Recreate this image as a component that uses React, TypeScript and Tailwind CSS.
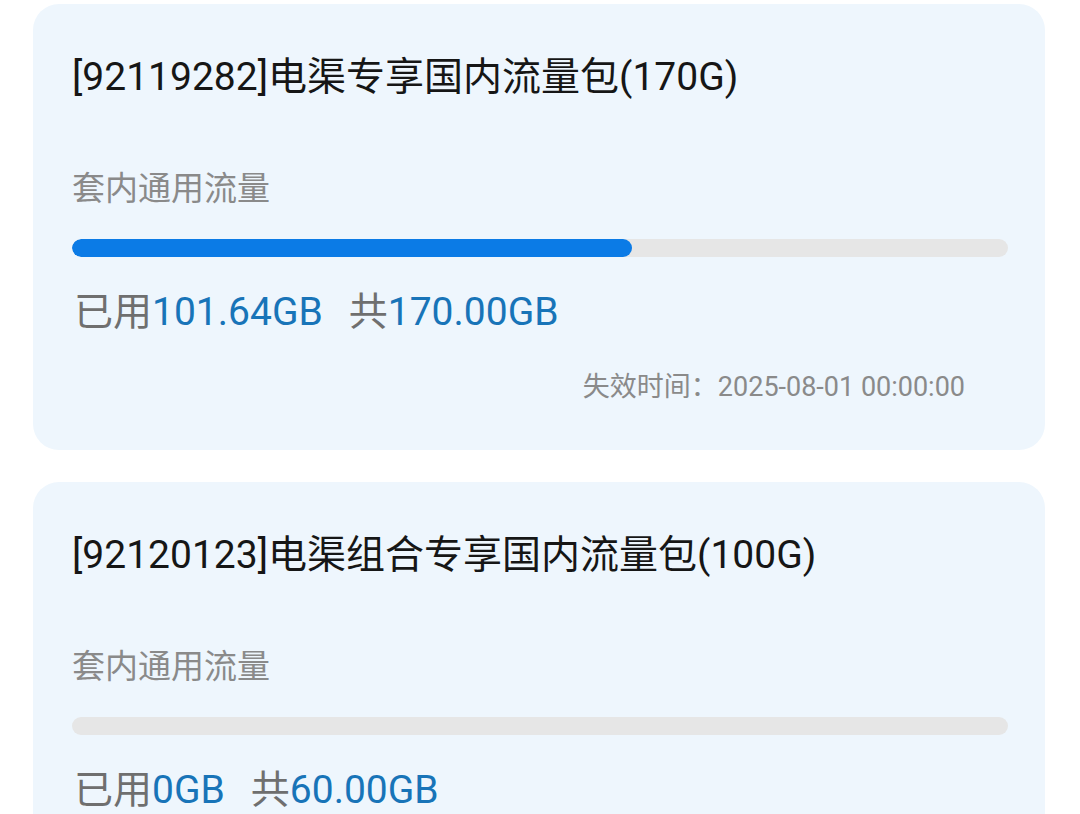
const packages = [
  {
    id: '92119282',
    name: '电渠专享国内流量包(170G)',
    used: '101.64GB',
    total: '170.00GB',
    percent: 59.8,
    expires: '2025-08-01 00:00:00',
  },
  {
    id: '92120123',
    name: '电渠组合专享国内流量包(100G)',
    used: '0GB',
    total: '60.00GB',
    percent: 0,
    expires: '2025-08-01 00:00:00',
  },
]

const font = { fontFamily: 'Roboto, "Noto Sans CJK SC", sans-serif' }

export default function App() {
  return (
    <div className="min-h-screen bg-white pt-[4px] px-[33px]" style={font}>
      <div className="flex flex-col gap-[32px]">
        {packages.map((p) => (
          <div key={p.id} className="w-[1012px] rounded-[26px] bg-[#eef6fd] pt-[49px] pb-[45px] pl-[39px] pr-[37px]">
            <div className="text-[39px] leading-[48px] text-[#161616]">
              [{p.id}]{p.name}
            </div>
            <div className="mt-[68px] text-[33px] leading-[40px] text-[#8a8a8a]">套内通用流量</div>
            <div className="mt-[30px] h-[18px] rounded-full bg-[#e6e6e6] overflow-hidden">
              {p.percent > 0 && (
                <div className="h-full rounded-full bg-[#0b7be6]" style={{ width: `${p.percent}%` }} />
              )}
            </div>
            <div className="mt-[31px] text-[39px] leading-[48px] pl-[2px]">
              <span className="text-[#6f6f6f]">已用</span>
              <span className="text-[#1874b8]">{p.used}</span>
              <span className="ml-[26px] text-[#6f6f6f]">共</span>
              <span className="text-[#1874b8]">{p.total}</span>
            </div>
            <div className="mt-[33px] pr-[43px] text-right text-[27px] leading-[36px] text-[#8a8a8a]">
              失效时间：{p.expires}
            </div>
          </div>
        ))}
      </div>
    </div>
  )
}
